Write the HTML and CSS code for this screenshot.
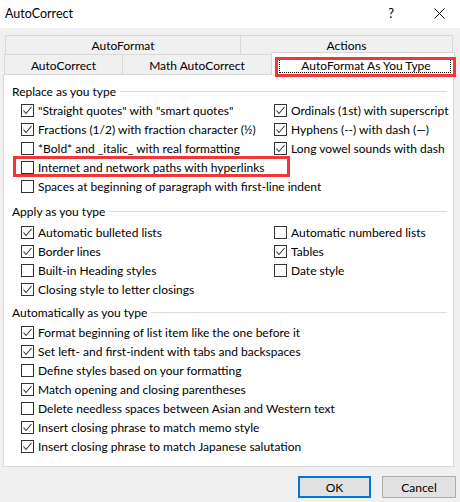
FILE: index.html
```html
<!DOCTYPE html>
<html lang="en">
<head>
  <meta charset="UTF-8" />
  <title>AutoCorrect</title>
  <link rel="stylesheet" href="styles.css">
</head>
<body>
  <div class="dialog">
    <div class="titlebar">
      <span class="title">AutoCorrect</span>
      <span class="help">?</span>
      <svg class="close" width="11" height="11" viewBox="0 0 11 11"><path d="M0.5 0.5 L10.5 10.5 M10.5 0.5 L0.5 10.5" stroke="#000" stroke-width="1" fill="none"/></svg>
    </div>

    <div class="body">
      <div class="tab-row back">
        <div class="tab t-format">AutoFormat</div>
        <div class="tab t-actions">Actions</div>
      </div>
      <div class="tab-row front">
        <div class="tab t-correct">AutoCorrect</div>
        <div class="tab t-math">Math AutoCorrect</div>
        <div class="tab active"><span class="focus">AutoFormat As You Type</span></div>
      </div>

      <div class="panel">
        <div class="group">
          <div class="group-head"><span>Replace as you type</span><i></i></div>
          <div class="cols">
            <div class="col left">
              <label class="opt"><span class="cb"><svg viewBox="0 0 13 13"><path d="M2.5 6.5 L5 9.5 L10.5 3"/></svg></span>"Straight quotes" with "smart quotes"</label>
              <label class="opt"><span class="cb"><svg viewBox="0 0 13 13"><path d="M2.5 6.5 L5 9.5 L10.5 3"/></svg></span>Fractions (1/2) with fraction character (½)</label>
              <label class="opt"><span class="cb"></span>*Bold* and _italic_ with real formatting</label>
              <label class="opt"><span class="cb"></span>Internet and network paths with hyperlinks</label>
              <label class="opt"><span class="cb"></span>Spaces at beginning of paragraph with first-line indent</label>
            </div>
            <div class="col">
              <label class="opt"><span class="cb"><svg viewBox="0 0 13 13"><path d="M2.5 6.5 L5 9.5 L10.5 3"/></svg></span>Ordinals (1st) with superscript</label>
              <label class="opt"><span class="cb"><svg viewBox="0 0 13 13"><path d="M2.5 6.5 L5 9.5 L10.5 3"/></svg></span>Hyphens (--) with dash (—)</label>
              <label class="opt"><span class="cb"><svg viewBox="0 0 13 13"><path d="M2.5 6.5 L5 9.5 L10.5 3"/></svg></span>Long vowel sounds with dash</label>
            </div>
          </div>
        </div>

        <div class="group apply">
          <div class="group-head"><span>Apply as you type</span><i></i></div>
          <div class="cols">
            <div class="col left">
              <label class="opt"><span class="cb"><svg viewBox="0 0 13 13"><path d="M2.5 6.5 L5 9.5 L10.5 3"/></svg></span>Automatic bulleted lists</label>
              <label class="opt"><span class="cb"><svg viewBox="0 0 13 13"><path d="M2.5 6.5 L5 9.5 L10.5 3"/></svg></span>Border lines</label>
              <label class="opt"><span class="cb"></span>Built-in Heading styles</label>
              <label class="opt"><span class="cb"><svg viewBox="0 0 13 13"><path d="M2.5 6.5 L5 9.5 L10.5 3"/></svg></span>Closing style to letter closings</label>
            </div>
            <div class="col">
              <label class="opt"><span class="cb"></span>Automatic numbered lists</label>
              <label class="opt"><span class="cb"><svg viewBox="0 0 13 13"><path d="M2.5 6.5 L5 9.5 L10.5 3"/></svg></span>Tables</label>
              <label class="opt"><span class="cb"></span>Date style</label>
            </div>
          </div>
        </div>

        <div class="group auto">
          <div class="group-head"><span>Automatically as you type</span><i></i></div>
          <div class="col list">
            <label class="opt"><span class="cb"><svg viewBox="0 0 13 13"><path d="M2.5 6.5 L5 9.5 L10.5 3"/></svg></span>Format beginning of list item like the one before it</label>
            <label class="opt"><span class="cb"><svg viewBox="0 0 13 13"><path d="M2.5 6.5 L5 9.5 L10.5 3"/></svg></span>Set left- and first-indent with tabs and backspaces</label>
            <label class="opt"><span class="cb"></span>Define styles based on your formatting</label>
            <label class="opt"><span class="cb"><svg viewBox="0 0 13 13"><path d="M2.5 6.5 L5 9.5 L10.5 3"/></svg></span>Match opening and closing parentheses</label>
            <label class="opt"><span class="cb"></span>Delete needless spaces between Asian and Western text</label>
            <label class="opt"><span class="cb"><svg viewBox="0 0 13 13"><path d="M2.5 6.5 L5 9.5 L10.5 3"/></svg></span>Insert closing phrase to match memo style</label>
            <label class="opt"><span class="cb"><svg viewBox="0 0 13 13"><path d="M2.5 6.5 L5 9.5 L10.5 3"/></svg></span>Insert closing phrase to match Japanese salutation</label>
          </div>
        </div>
      </div>

      <div class="buttons">
        <button class="btn default">OK</button>
        <button class="btn">Cancel</button>
      </div>
    </div>

    <!-- annotation boxes -->
    <div class="mark mark-tab"></div>
    <div class="mark mark-row"></div>
  </div>
</body>
</html>
```

FILE: styles.css
```css
html, body {
  margin: 0;
  padding: 0;
}

body {
  font-family: Lato, "Noto Sans", sans-serif;
  font-size: 12px;
  color: #000;
  background: #f0f0f0;
}

.dialog {
  position: relative;
  width: 460px;
  height: 502px;
  overflow: hidden;
}

/* title bar */
.titlebar {
  height: 28px;
  background: #fff;
  display: flex;
  align-items: center;
  padding-bottom: 2px;
  box-sizing: border-box;
}

.title {
  margin-left: 5px;
  font-size: 12.5px;
  flex: 1;
}

.help {
  font-size: 13px;
  margin-right: 40px;
}

.close {
  margin-right: 15px;
}

/* tabs */
.body {
  padding-top: 7px;
}

.tab-row {
  display: flex;
}

.tab-row.back {
  margin-left: 5px;
  width: 448px;
  height: 19px;
}

.tab-row.front {
  margin-left: 4px;
  height: 20px;
}

.tab {
  box-sizing: border-box;
  border-top: 1px solid #d9d9d9;
  border-left: 1px solid #d9d9d9;
  display: flex;
  justify-content: center;
  align-items: center;
  padding-top: 1px;
}

.t-format { width: 235px; }
.t-actions { width: 213px; border-right: 1px solid #d9d9d9; }
.t-correct { width: 118px; }
.t-math { width: 149px; }

.tab.active {
  width: 184px;
  height: 23px;
  margin-top: -2px;
  margin-bottom: -1px;
  background: #fff;
  border-right: 1px solid #d9d9d9;
  position: relative;
  z-index: 1;
  align-items: flex-end;
  padding: 0 3px 2px 7px;
}

.focus {
  flex: 1;
  text-align: center;
  border: 1px dotted #000;
  line-height: 12px;
  padding: 0 0 0 2px;
}

/* panel */
.panel {
  margin-left: 3px;
  width: 451px;
  height: 393px;
  box-sizing: border-box;
  background: #fff;
  border: 1px solid #d9d9d9;
  padding: 6px 6px 0 8px;
}

.group-head {
  display: flex;
  align-items: center;
  height: 20px;
  gap: 4px;
}

.group-head i {
  flex: 1;
  border-top: 1px solid #dcdcdc;
  margin-top: 1px;
}

.group.apply { margin-top: 5px; }
.group.apply .cols { margin-top: 2px; }
.group.auto { margin-top: 3px; }
.group.auto .list { margin-top: 1px; }

.cols {
  display: flex;
}

.col {
  display: flex;
  flex-direction: column;
  padding-left: 9px;
}

.col.left {
  width: 262px;
  box-sizing: border-box;
}

.col:not(.left):not(.list) {
  padding-left: 0;
}

.opt {
  display: flex;
  align-items: center;
  height: 19px;
  white-space: nowrap;
}

.cb {
  width: 13px;
  height: 13px;
  box-sizing: border-box;
  border: 1px solid #333;
  margin-right: 4px;
  flex: none;
  position: relative;
}

.cb svg {
  position: absolute;
  left: -1px;
  top: -1px;
  width: 13px;
  height: 13px;
}

.cb path {
  fill: none;
  stroke: #333;
  stroke-width: 1.1;
}

/* buttons */
.buttons {
  display: flex;
  justify-content: flex-end;
  gap: 11px;
  padding: 9px 4px 0 0;
}

.btn {
  font-family: inherit;
  font-size: 12px;
  color: #000;
  height: 22px;
  width: 74px;
  background: #e1e1e1;
  border: 1px solid #adadad;
  padding: 0;
}

.btn.default {
  width: 73px;
  border: 2px solid #0078d7;
}

/* red annotation boxes over the screenshot */
.mark {
  position: absolute;
  border: 3px solid #ee3737;
  box-sizing: border-box;
  z-index: 5;
}

.mark-tab {
  left: 275px;
  top: 57px;
  width: 181px;
  height: 20px;
}

.mark-row {
  left: 13px;
  top: 156px;
  width: 277px;
  height: 21px;
}
```
